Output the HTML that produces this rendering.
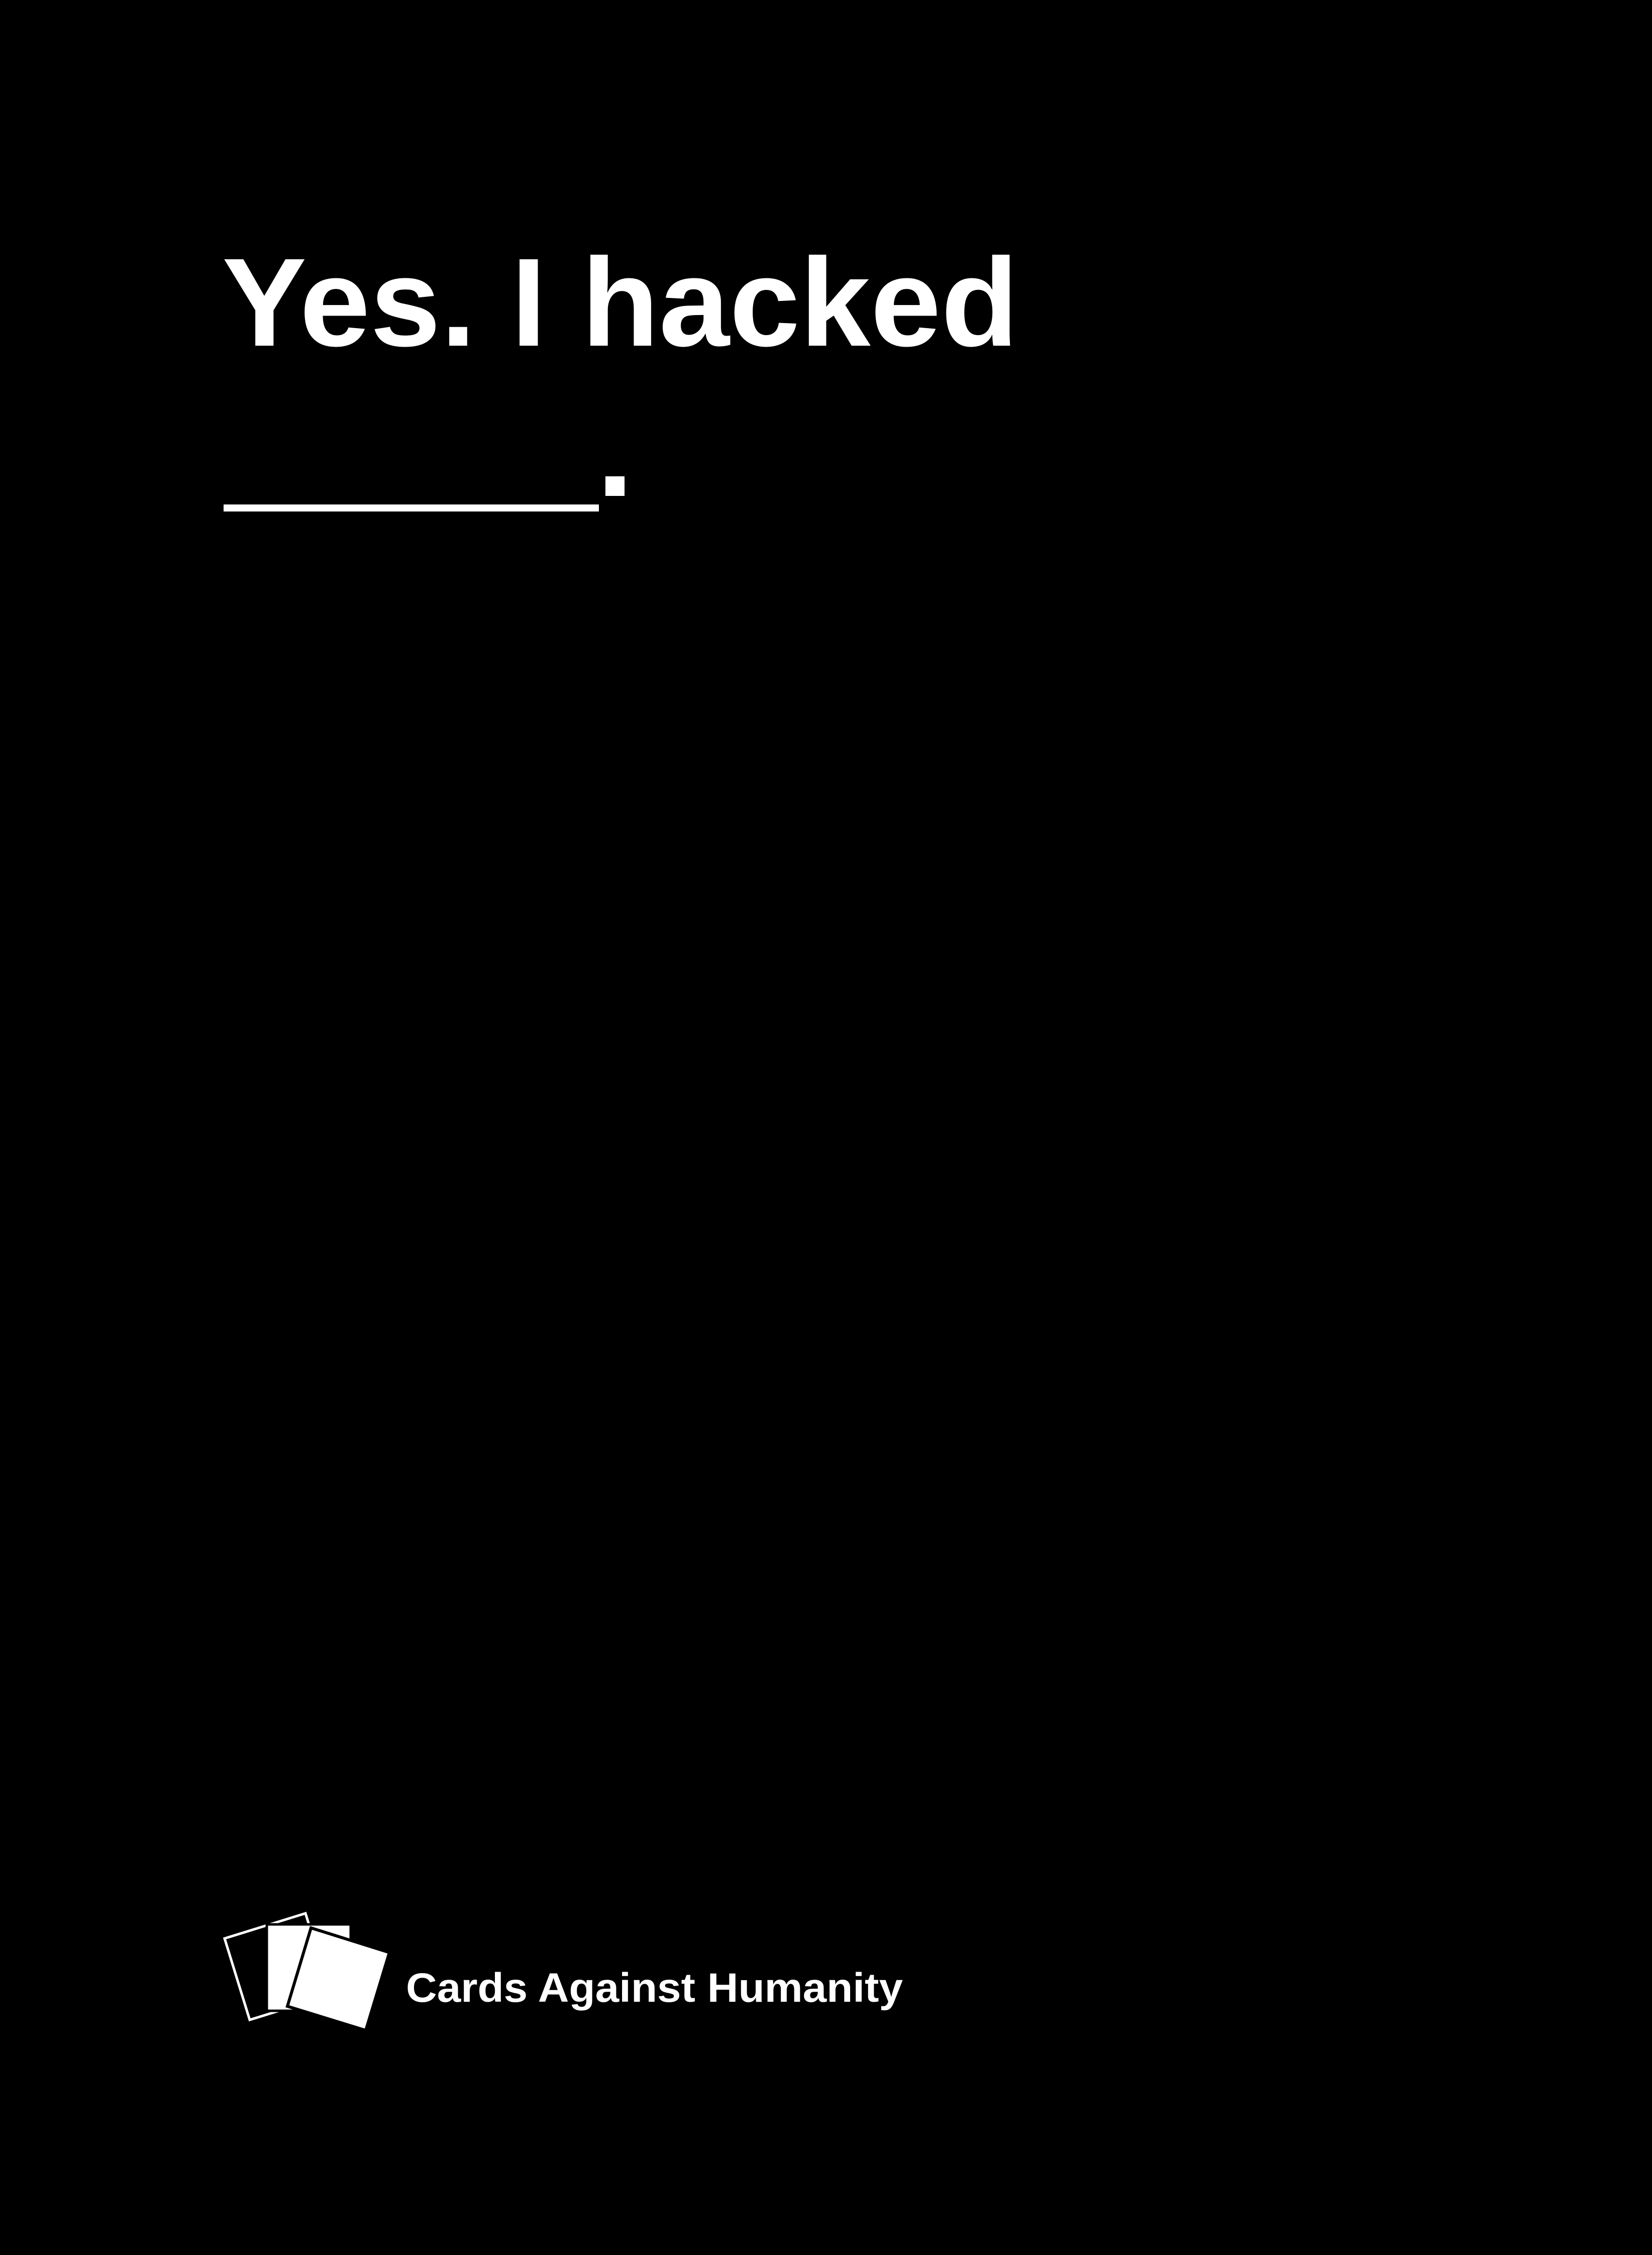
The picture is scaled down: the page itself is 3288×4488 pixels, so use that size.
<!DOCTYPE html>
<html><head><meta charset="utf-8"><style>
html,body{margin:0;padding:0;background:#000;}
svg{display:block;}
</style></head><body>
<svg width="3288" height="4488" viewBox="0 0 3288 4488" xmlns="http://www.w3.org/2000/svg">
<rect width="3288" height="4488" fill="#000"/>
<text x="442" y="688" fill="#fff" font-family="Liberation Sans, Arial, sans-serif" font-weight="bold" font-size="250" textLength="1585" lengthAdjust="spacingAndGlyphs">Yes. I hacked</text>
<rect x="445" y="1004" width="747" height="14" fill="#fff"/>
<rect x="1205" y="948" width="38" height="39" fill="#fff"/>
<!-- logo -->
<polygon points="447,3858 608,3808 658,3970 497,4020" fill="#000" stroke="#fff" stroke-width="5"/>
<rect x="531" y="3830" width="167" height="172" fill="#fff" stroke="#000" stroke-width="5"/>
<polygon points="619,3837 775,3886 728,4041 572,3993" fill="#fff" stroke="#000" stroke-width="6"/>
<text x="808" y="3984" fill="#fff" font-family="Liberation Sans, Arial, sans-serif" font-weight="bold" font-size="82" textLength="989" lengthAdjust="spacingAndGlyphs">Cards Against Humanity</text>
</svg>
</body></html>
